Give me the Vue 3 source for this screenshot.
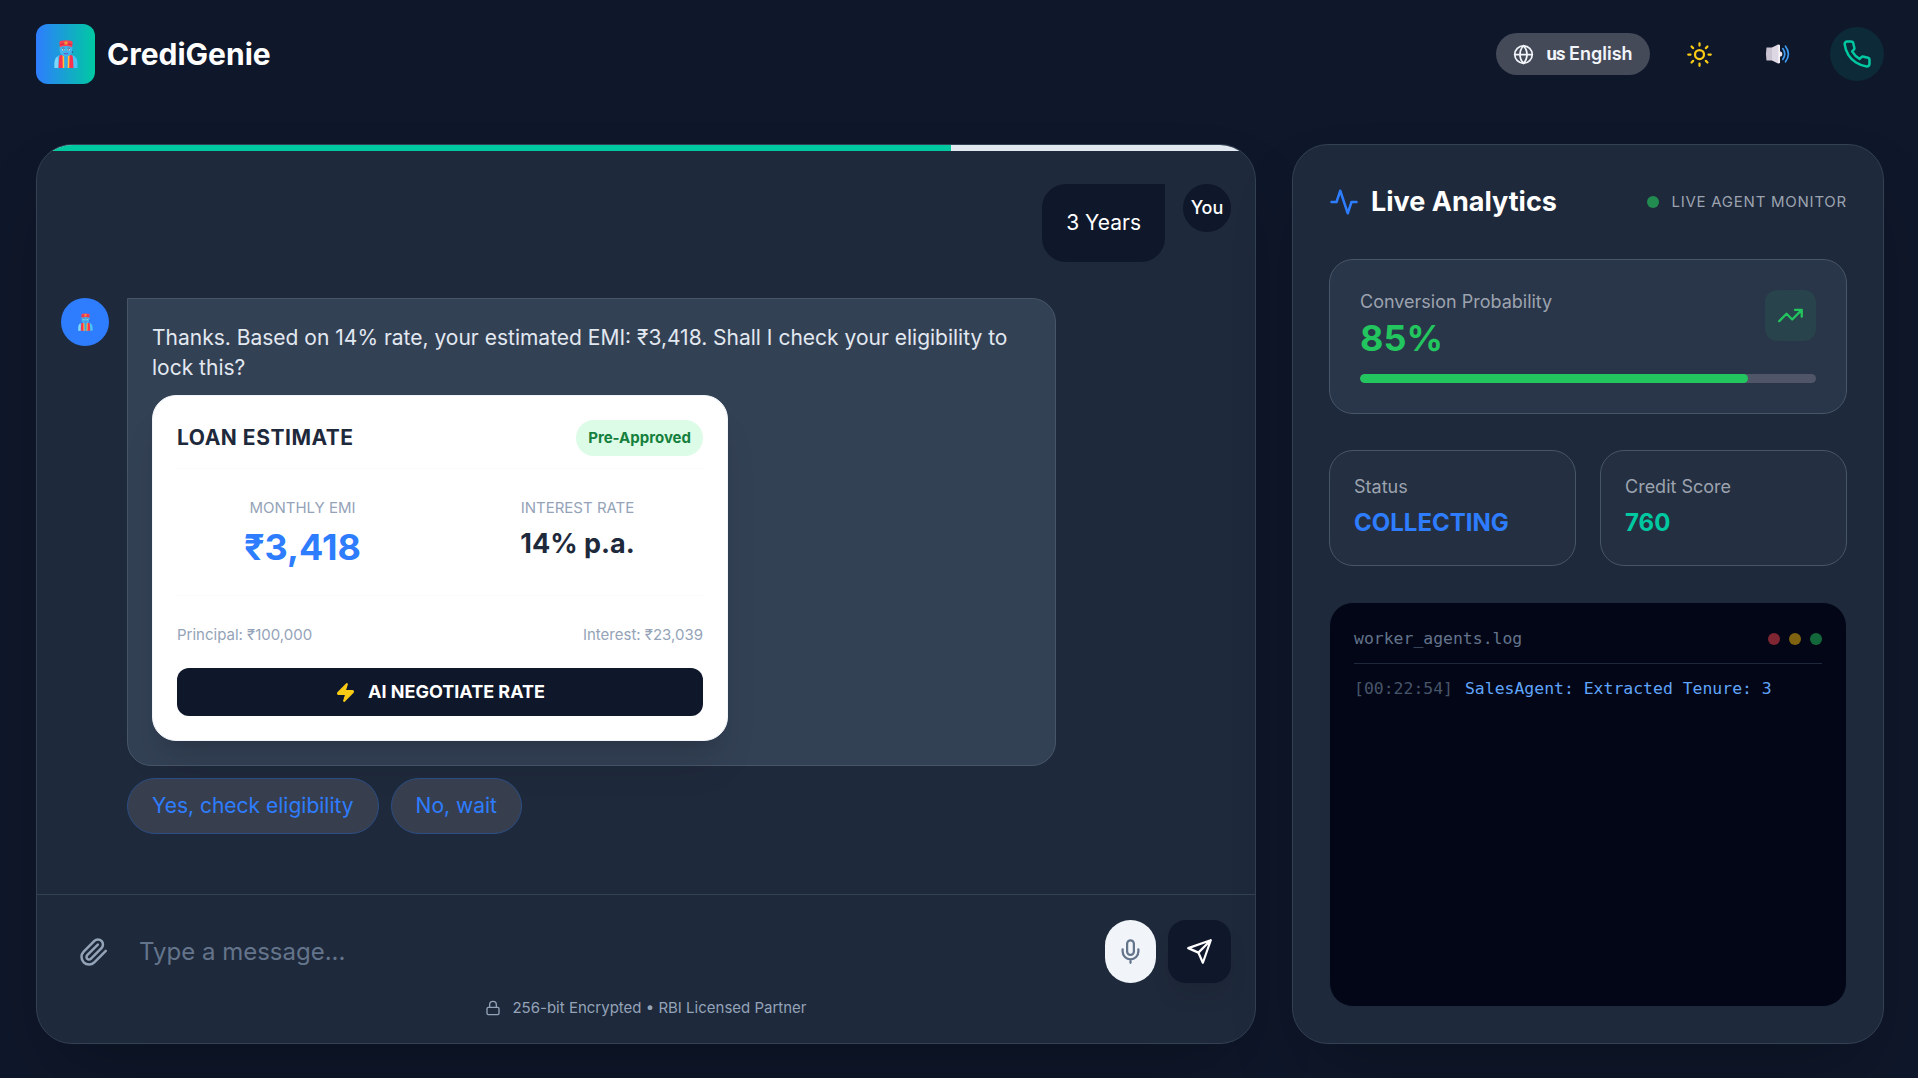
<script setup>
import { computed, ref } from 'vue'

const message = ref('')
const progress = ref(75)
const probability = ref(85)
const status = ref('COLLECTING')
const creditScore = ref(760)

const estimate = ref({
  emi: 3418,
  rate: 14,
  principal: 100000,
  interest: 23039
})
const replies = ref(['Yes, check eligibility', 'No, wait'])
const logs = ref([{ id: 1, time: '00:22:54', text: 'SalesAgent: Extracted Tenure: 3' }])

const rupees = (n) => `₹${n.toLocaleString('en-US')}`
const botText = computed(
  () =>
    `Thanks. Based on ${estimate.value.rate}% rate, your estimated EMI: ${rupees(estimate.value.emi)}. Shall I check your eligibility to lock this?`
)
</script>

<template>
  <div class="app">
    <!-- genie drawing, used by the logo and the bot avatar -->
    <svg class="defs" width="0" height="0">
      <symbol id="genie" viewBox="0 0 24 28">
        <path d="M0.5 28v-4.500c0-5.500 3-8.500 7-8.500h9c4 0 7 3 7 8.500v4.500z" fill="#4cc2f5" />
        <path d="M0.500 28v-4.500c0-3 1-5.500 2.700-7 1.300 3 1.300 7 1.100 11.500z" fill="#7bd8fb" />
        <path d="M4.500 28c.3-5 .2-9 1-12.500l3.500-.8 3 2.300 3-2.300 3.500.8c.8 3.500.7 7.500 1 12.500z" fill="#f8324f" />
        <path d="M8.800 28l-.3-13 3.500 2.500 3.500-2.500-.3 13z" fill="#ffc23c" />
        <path d="M10.300 28l-.2-12.300h3.800l-.2 12.300z" fill="#35a8e6" />
        <path d="M5.700 6h12.600v4.500c0 3.500-2.800 6-6.300 6s-6.300-2.500-6.300-6z" fill="#3fb4ee" />
        <path d="M5.300 2.500Q5.500.3 12 .3t6.700 2.200l-.6 4.700Q12 5 5.900 7.200z" fill="#fa4054" />
        <path d="M6.200 4.700Q12 2 17.800 4.700" stroke="#c9283f" stroke-width="1" fill="none" />
        <circle cx="12" cy="3" r="1.800" fill="#f59a32" />
        <path d="M8 8.200h2.600M13.400 8.200h2.600" stroke="#52516f" stroke-width=".8" />
        <circle cx="9.400" cy="9.800" r="1.100" fill="#e8f3fb" />
        <circle cx="14.600" cy="9.800" r="1.100" fill="#e8f3fb" />
        <circle cx="9.600" cy="9.900" r=".6" fill="#37405e" />
        <circle cx="14.400" cy="9.900" r=".6" fill="#37405e" />
        <path d="M10 13.200q2 1.400 4 0" stroke="#7454c8" stroke-width="1.100" fill="none" />
        <circle cx="18.400" cy="12" r=".7" fill="#2d4470" />
      </symbol>
    </svg>

    <header class="header">
      <div class="brand">
        <div class="logo">
          <svg width="24" height="28"><use href="#genie" /></svg>
        </div>
        <h1>CrediGenie</h1>
      </div>
      <div class="actions">
        <button class="language">
          <svg class="icon" width="21" height="21" viewBox="0 0 24 24">
            <circle cx="12" cy="12" r="10" />
            <path d="M12 2a14.5 14.5 0 0 0 0 20 14.5 14.5 0 0 0 0-20" />
            <path d="M2 12h20" />
          </svg>
          <span><span class="flag">us</span> English</span>
        </button>
        <button class="icon-button sun">
          <svg class="icon" width="27" height="27" viewBox="0 0 24 24">
            <circle cx="12" cy="12" r="4" />
            <path d="M12 2v2M12 20v2M4.930 4.930l1.410 1.410M17.660 17.660l1.410 1.410M2 12h2M20 12h2M6.340 17.660l-1.410 1.410M19.070 4.930l-1.410 1.410" />
          </svg>
        </button>
        <button class="icon-button speaker">
          <svg width="26" height="20" viewBox="0 0 26 20">
            <path d="M1.500 3.600h6v12.800h-6Q.4 10 1.500 3.600z" fill="#c9c2d1" />
            <path d="M7 3.600L13 .6q1.500-.5 2 .9v17q-.5 1.400-2 .9l-6-3z" fill="#ddd6e3" />
            <path d="M13.300.9q1.500 0 1.700.6v17q-.4.600-1.700.6z" fill="#f6f2f8" />
            <path d="M15 7.200q2.400.4 2.400 2.800t-2.400 2.800z" fill="#e9e5ee" />
            <path d="M17.800 4.600q4 5.400 0 10.800M20.500 2.200q5.800 7.800 0 15.600" fill="none" stroke="#3f9bf2" stroke-width="1.700" stroke-linecap="round" />
          </svg>
        </button>
        <button class="phone">
          <svg class="icon" width="30" height="30" viewBox="0 0 24 24">
            <path d="M22 16.920v3a2 2 0 0 1-2.180 2 19.790 19.790 0 0 1-8.630-3.070 19.500 19.500 0 0 1-6-6 19.790 19.790 0 0 1-3.070-8.670A2 2 0 0 1 4.110 2h3a2 2 0 0 1 2 1.720 12.840 12.840 0 0 0 .7 2.810 2 2 0 0 1-.45 2.110L8.090 9.910a16 16 0 0 0 6 6l1.270-1.270a2 2 0 0 1 2.110-.45 12.840 12.840 0 0 0 2.810.7A2 2 0 0 1 22 16.920z" />
          </svg>
        </button>
      </div>
    </header>

    <main class="content">
      <section class="panel chat">
        <div class="progress">
          <div class="progress-value" :style="{ width: progress + '%' }"></div>
        </div>

        <div class="messages">
          <div class="row user-row">
            <div class="bubble user-bubble">3 Years</div>
            <div class="avatar user-avatar">You</div>
          </div>

          <div class="row">
            <div class="avatar bot-avatar">
              <svg width="15" height="18"><use href="#genie" /></svg>
            </div>
            <div class="bot-column">
              <div class="bubble bot-bubble">
                <p>{{ botText }}</p>
                <div class="estimate">
                  <div class="estimate-header">
                    <h3>LOAN ESTIMATE</h3>
                    <span class="badge">Pre-Approved</span>
                  </div>
                  <div class="estimate-values">
                    <div>
                      <div class="label">MONTHLY EMI</div>
                      <div class="emi">{{ rupees(estimate.emi) }}</div>
                    </div>
                    <div>
                      <div class="label">INTEREST RATE</div>
                      <div class="rate">{{ estimate.rate }}% p.a.</div>
                    </div>
                  </div>
                  <div class="estimate-footer">
                    <span>Principal: {{ rupees(estimate.principal) }}</span>
                    <span>Interest: {{ rupees(estimate.interest) }}</span>
                  </div>
                  <button class="negotiate">
                    <svg class="icon bolt" width="21" height="21" viewBox="0 0 24 24">
                      <path d="M4 14a1 1 0 0 1-.78-1.630l9.900-10.200a.5.5 0 0 1 .86.460l-1.920 6.020A1 1 0 0 0 13 10h7a1 1 0 0 1 .78 1.630l-9.900 10.200a.5.5 0 0 1-.86-.460l1.920-6.020A1 1 0 0 0 11 14z" />
                    </svg>
                    AI NEGOTIATE RATE
                  </button>
                </div>
              </div>
              <div class="replies">
                <button v-for="reply of replies" :key="reply" class="reply" @click="message = reply">
                  {{ reply }}
                </button>
              </div>
            </div>
          </div>
        </div>

        <div class="composer">
          <div class="composer-row">
            <button class="attach">
              <svg class="icon" width="30" height="30" viewBox="0 0 24 24">
                <path d="m21.440 11.050-9.190 9.190a6 6 0 0 1-8.490-8.490l8.570-8.570A4 4 0 1 1 18 8.840l-8.590 8.570a2 2 0 0 1-2.830-2.830l8.490-8.480" />
              </svg>
            </button>
            <input v-model="message" type="text" placeholder="Type a message..." />
            <button class="mic">
              <svg class="icon" width="27" height="27" viewBox="0 0 24 24">
                <rect x="9" y="2" width="6" height="13" rx="3" />
                <path d="M19 10v2a7 7 0 0 1-14 0v-2M12 19v3" />
              </svg>
            </button>
            <button class="send">
              <svg class="icon" width="27" height="27" viewBox="0 0 24 24">
                <path d="m22 2-7 20-4-9-9-4ZM22 2 11 13" />
              </svg>
            </button>
          </div>
          <div class="secure">
            <svg class="icon" width="16" height="16" viewBox="0 0 24 24">
              <rect x="3" y="11" width="18" height="11" rx="2" />
              <path d="M7 11V7a5 5 0 0 1 10 0v4" />
            </svg>
            <span>256-bit Encrypted • RBI Licensed Partner</span>
          </div>
        </div>
      </section>

      <section class="panel analytics">
        <div class="analytics-header">
          <h2>
            <svg class="icon" width="30" height="30" viewBox="0 0 24 24">
              <path d="M22 12h-4l-3 9L9 3l-3 9H2" />
            </svg>
            Live Analytics
          </h2>
          <div class="monitor"><span class="dot"></span>LIVE AGENT MONITOR</div>
        </div>

        <div class="card probability">
          <div class="probability-top">
            <div>
              <div class="card-label">Conversion Probability</div>
              <div class="percent">{{ probability }}%</div>
            </div>
            <div class="trend">
              <svg class="icon" width="27" height="27" viewBox="0 0 24 24">
                <path d="M22 7l-8.500 8.500-5-5L2 17M16 7h6v6" />
              </svg>
            </div>
          </div>
          <div class="bar">
            <div class="bar-value" :style="{ width: probability + '%' }"></div>
          </div>
        </div>

        <div class="stats">
          <div class="card stat">
            <div class="card-label">Status</div>
            <div class="stat-value status">{{ status }}</div>
          </div>
          <div class="card stat">
            <div class="card-label">Credit Score</div>
            <div class="stat-value score">{{ creditScore }}</div>
          </div>
        </div>

        <div class="terminal">
          <div class="terminal-header">
            <span>worker_agents.log</span>
            <div class="lights"><i class="red"></i><i class="yellow"></i><i class="green"></i></div>
          </div>
          <div v-for="log of logs" :key="log.id" class="log">
            <span class="time">[{{ log.time }}]</span>
            <span>{{ log.text }}</span>
          </div>
        </div>
      </section>
    </main>
  </div>
</template>

<style>
body {
  background: #0f172a;
}
</style>

<style scoped>
* {
  box-sizing: border-box;
}
.app {
  height: 1078px;
  overflow: hidden;
  padding: 24px 34px 0 36px;
  background: #0f172a;
  color: #fff;
  font-family: Inter, 'Liberation Sans', sans-serif;
  font-size: 21px;
  line-height: 30px;
}
h1,
h2,
h3,
p {
  margin: 0;
}
button {
  border: none;
  padding: 0;
  cursor: pointer;
  background: none;
  color: inherit;
  font: inherit;
  display: flex;
  align-items: center;
  justify-content: center;
}
.defs {
  display: block;
}
.icon {
  display: block;
  flex: none;
  fill: none;
  stroke: currentColor;
  stroke-width: 2;
  stroke-linecap: round;
  stroke-linejoin: round;
}

/* header */
.header {
  height: 60px;
  margin-bottom: 60px;
  display: flex;
  align-items: center;
  justify-content: space-between;
}
.brand {
  display: flex;
  align-items: center;
  gap: 12px;
}
.logo {
  width: 59px;
  height: 60px;
  border-radius: 12px;
  background: linear-gradient(to right, #2e7dff, #00c9a2);
  display: flex;
  align-items: center;
  justify-content: center;
}
.brand h1 {
  font-size: 30px;
  font-weight: 700;
  line-height: 42px;
}
.actions {
  display: flex;
  align-items: center;
  gap: 24px;
}
.language {
  width: 154px;
  height: 42px;
  gap: 12px;
  border-radius: 21px;
  background: #454a59;
  color: #f1f5f9;
  font-size: 18px;
  font-weight: 600;
}
.flag {
  font-family: Roboto, sans-serif;
  font-size: 18.5px;
  font-weight: 700;
  letter-spacing: -0.9px;
}
.icon-button {
  width: 51px;
  height: 51px;
}
.speaker {
  width: 57px;
}
.sun {
  color: #facc15;
}
.phone {
  width: 54px;
  height: 54px;
  border-radius: 50%;
  background: #0d2a38;
  color: #00c9a2;
}

/* panels */
.content {
  display: grid;
  grid-template-columns: 1220px 592px;
  gap: 36px;
  height: 900px;
}
.panel {
  display: flex;
  flex-direction: column;
  overflow: hidden;
  border: 1px solid #334155;
  border-radius: 36px;
  background: #1e293b;
  box-shadow: 0 38px 75px -18px rgba(0, 0, 0, 0.25);
}
.progress {
  flex: none;
  height: 6px;
  background: #e2e8f0;
}
.progress-value {
  height: 100%;
  background: #00c9a2;
}

/* messages */
.messages {
  flex: 1;
  padding: 33px 24px 0;
  display: flex;
  flex-direction: column;
  gap: 36px;
}
.row {
  display: flex;
  align-items: flex-start;
  gap: 18px;
}
.user-row {
  justify-content: flex-end;
}
.avatar {
  flex: none;
  width: 48px;
  height: 48px;
  border-radius: 50%;
  display: flex;
  align-items: center;
  justify-content: center;
}
.user-avatar {
  background: #0f172a;
  font-size: 18px;
  font-weight: 500;
}
.bot-avatar {
  background: #2e7dff;
}
.user-bubble {
  padding: 24px;
  border-radius: 24px 0 24px 24px;
  background: #0f172a;
}
.bot-column {
  width: 929px;
}
.bot-bubble {
  padding: 24px;
  border: 1px solid #475569;
  border-radius: 0 24px 24px 24px;
  background: #334155;
  color: #e2e8f0;
}
.estimate {
  width: 576px;
  margin-top: 12px;
  padding: 24px;
  border: 1px solid #f1f5f9;
  border-radius: 24px;
  background: #fff;
  box-shadow: 0 30px 38px -8px rgba(0, 0, 0, 0.1), 0 12px 15px -9px rgba(0, 0, 0, 0.1);
  color: #1e293b;
}
.estimate-header {
  display: flex;
  align-items: center;
  justify-content: space-between;
  padding-bottom: 12px;
  margin-bottom: 24px;
  border-bottom: 1px solid #f8fafc;
}
.estimate-header h3 {
  font-size: 21px;
  font-weight: 700;
  letter-spacing: 0.525px;
}
.badge {
  padding: 3px 12px;
  border-radius: 18px;
  background: #dcfce7;
  color: #15803d;
  font-size: 15px;
  font-weight: 700;
}
.estimate-values {
  display: grid;
  grid-template-columns: 1fr 1fr;
  gap: 24px;
  padding-bottom: 24px;
  text-align: center;
}
.label {
  color: #94a3b8;
  font-size: 15px;
}
.emi {
  color: #2e7dff;
  font-size: 36px;
  font-weight: 700;
  line-height: 48px;
}
.rate {
  font-size: 27px;
  font-weight: 700;
  line-height: 42px;
}
.estimate-footer {
  display: flex;
  justify-content: space-between;
  padding-top: 24px;
  margin-bottom: 18px;
  border-top: 1px solid #f8fafc;
  color: #94a3b8;
  font-size: 15px;
}
.negotiate {
  width: 100%;
  height: 48px;
  gap: 12px;
  border-radius: 12px;
  background: #0f172a;
  color: #fff;
  font-size: 18px;
  font-weight: 700;
}
.bolt {
  fill: #facc15;
  stroke: #facc15;
  stroke-width: 1.5;
}
.replies {
  display: flex;
  gap: 12px;
  margin-top: 12px;
}
.reply {
  padding: 12px 24px;
  border: 1px solid #2c4d84;
  border-radius: 28px;
  background: #373f4f;
  color: #2e7dff;
}

/* composer */
.composer {
  height: 149px;
  padding: 25px 24px 0;
  border-top: 1px solid #334155;
}
.composer-row {
  display: flex;
  align-items: center;
}
.attach {
  margin: 0 18px;
  color: #94a3b8;
}
.composer-row input {
  flex: 1;
  padding: 0 12px;
  border: none;
  outline: none;
  background: none;
  color: #fff;
  font: inherit;
  font-size: 24px;
  line-height: 36px;
}
.composer-row input::placeholder {
  color: #64748b;
}
.mic {
  width: 51px;
  height: 63px;
  margin-right: 12px;
  border-radius: 26px;
  background: #f1f5f9;
  color: #64748b;
}
.send {
  width: 63px;
  height: 63px;
  border-radius: 18px;
  background: #0f172a;
  box-shadow: 0 15px 22px -4px rgba(0, 0, 0, 0.1);
}
.secure {
  display: flex;
  align-items: center;
  justify-content: center;
  gap: 11px;
  margin-top: 10px;
  color: #94a3b8;
  font-size: 15px;
}

/* analytics */
.analytics {
  padding: 36px;
}
.analytics-header {
  display: flex;
  align-items: center;
  justify-content: space-between;
  margin-bottom: 36px;
}
.analytics-header h2 {
  display: flex;
  align-items: center;
  gap: 12px;
  font-size: 27px;
  font-weight: 700;
  line-height: 42px;
}
.analytics-header h2 svg {
  color: #2e7dff;
}
.monitor {
  display: flex;
  align-items: center;
  gap: 12px;
  color: #9ca3af;
  font-size: 15px;
  letter-spacing: 0.75px;
}
.dot {
  width: 12px;
  height: 12px;
  border-radius: 50%;
  background: #228b4f;
}
.card {
  border: 1px solid #475569;
  border-radius: 24px;
}
.card-label {
  color: #9ca3af;
  font-size: 18px;
  line-height: 24px;
}
.probability {
  padding: 30px;
  background: #293548;
}
.probability-top {
  display: flex;
  justify-content: space-between;
}
.percent {
  color: #22c55e;
  font-size: 36px;
  font-weight: 700;
  line-height: 48px;
}
.trend {
  width: 51px;
  height: 51px;
  border-radius: 12px;
  background: #28434b;
  color: #22c55e;
  display: flex;
  align-items: center;
  justify-content: center;
}
.bar {
  height: 9px;
  margin-top: 12px;
  border-radius: 5px;
  background: #505668;
  overflow: hidden;
}
.bar-value {
  height: 100%;
  border-radius: 5px;
  background: #22c55e;
}
.stats {
  display: grid;
  grid-template-columns: 1fr 1fr;
  gap: 24px;
  margin: 36px 0;
}
.stat {
  padding: 24px;
  background: #243041;
}
.stat-value {
  margin-top: 6px;
  font-size: 24px;
  font-weight: 700;
  line-height: 36px;
}
.status {
  color: #2e7dff;
}
.score {
  color: #00c9a2;
}

/* log window */
.terminal {
  flex: 1;
  padding: 24px;
  border: 1px solid #1e293b;
  border-radius: 24px;
  background: #020617;
  font-family: 'DejaVu Sans Mono', monospace;
  font-size: 16.45px;
  line-height: 24px;
}
.terminal-header {
  display: flex;
  align-items: center;
  justify-content: space-between;
  padding-bottom: 12px;
  margin-bottom: 12px;
  border-bottom: 1px solid #1e293b;
  color: #64748b;
}
.lights {
  display: flex;
  gap: 9px;
}
.lights i {
  width: 12px;
  height: 12px;
  border-radius: 50%;
}
.red {
  background: #7f2632;
}
.yellow {
  background: #806310;
}
.green {
  background: #12683a;
}
.log {
  display: flex;
  gap: 12px;
  padding-top: 1px;
  color: #60a5fa;
}
.time {
  color: #475569;
}
</style>
